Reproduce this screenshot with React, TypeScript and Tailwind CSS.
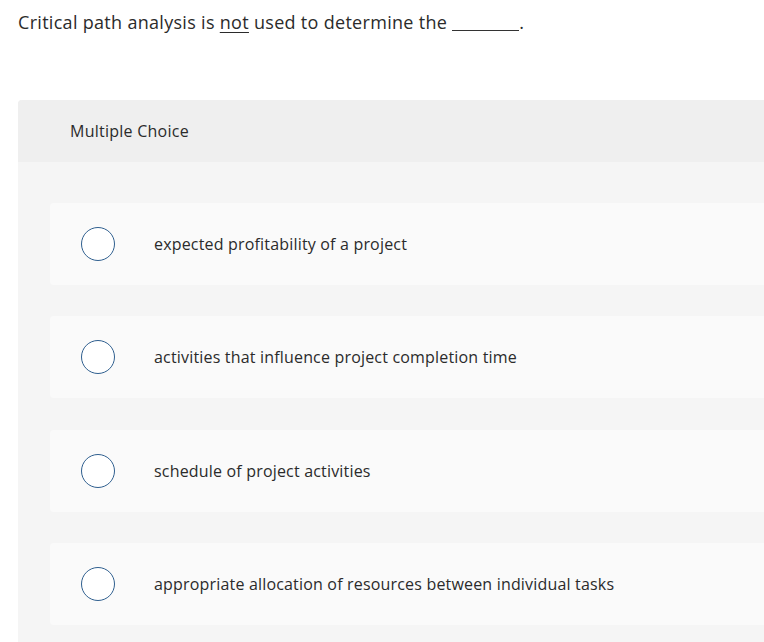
import React from 'react';

const choices = [
    'expected profitability of a project',
    'activities that influence project completion time',
    'schedule of project activities',
    'appropriate allocation of resources between individual tasks',
];

const App: React.FC = () => {
    return (
        <div className="w-[764px] h-[642px] overflow-hidden bg-white text-[#333] font-['Open_Sans','Liberation_Sans',sans-serif]">
            <p className="pl-[18px] pt-[9px] text-[18px] leading-[27px] tracking-[0.3px] text-[#2b2b2b]">
                Critical path analysis is <span className="underline underline-offset-[3px]">not</span> used to determine the{' '}
                <span className="inline-block w-[67px] h-[1px] bg-[#333] align-baseline translate-y-[2px]" />.
            </p>

            <div className="ml-[18px] mt-[64px] w-[780px] rounded-t-[4px] bg-[#f5f5f5] pb-10">
                <div className="h-[62px] bg-[#efefef] rounded-t-[4px] flex items-center pl-[52px] text-[16px] tracking-[0.25px] text-[#2b2b2b]">
                    Multiple Choice
                </div>
                <div className="flex flex-col gap-[31.4px] pl-[32px] pt-[41px]">
                    {choices.map((c) => (
                        <div key={c} className="h-[82px] rounded-[4px] bg-[#fafafa] flex items-center">
                            <span className="ml-[31px] w-[34px] h-[34px] rounded-full border-[1.5px] border-[#2f5f8f] bg-white shrink-0" />
                            <span className="ml-[39px] text-[16px] tracking-[0.18px] text-[#2b2b2b]">{c}</span>
                        </div>
                    ))}
                </div>
            </div>
        </div>
    );
};

export default App;
